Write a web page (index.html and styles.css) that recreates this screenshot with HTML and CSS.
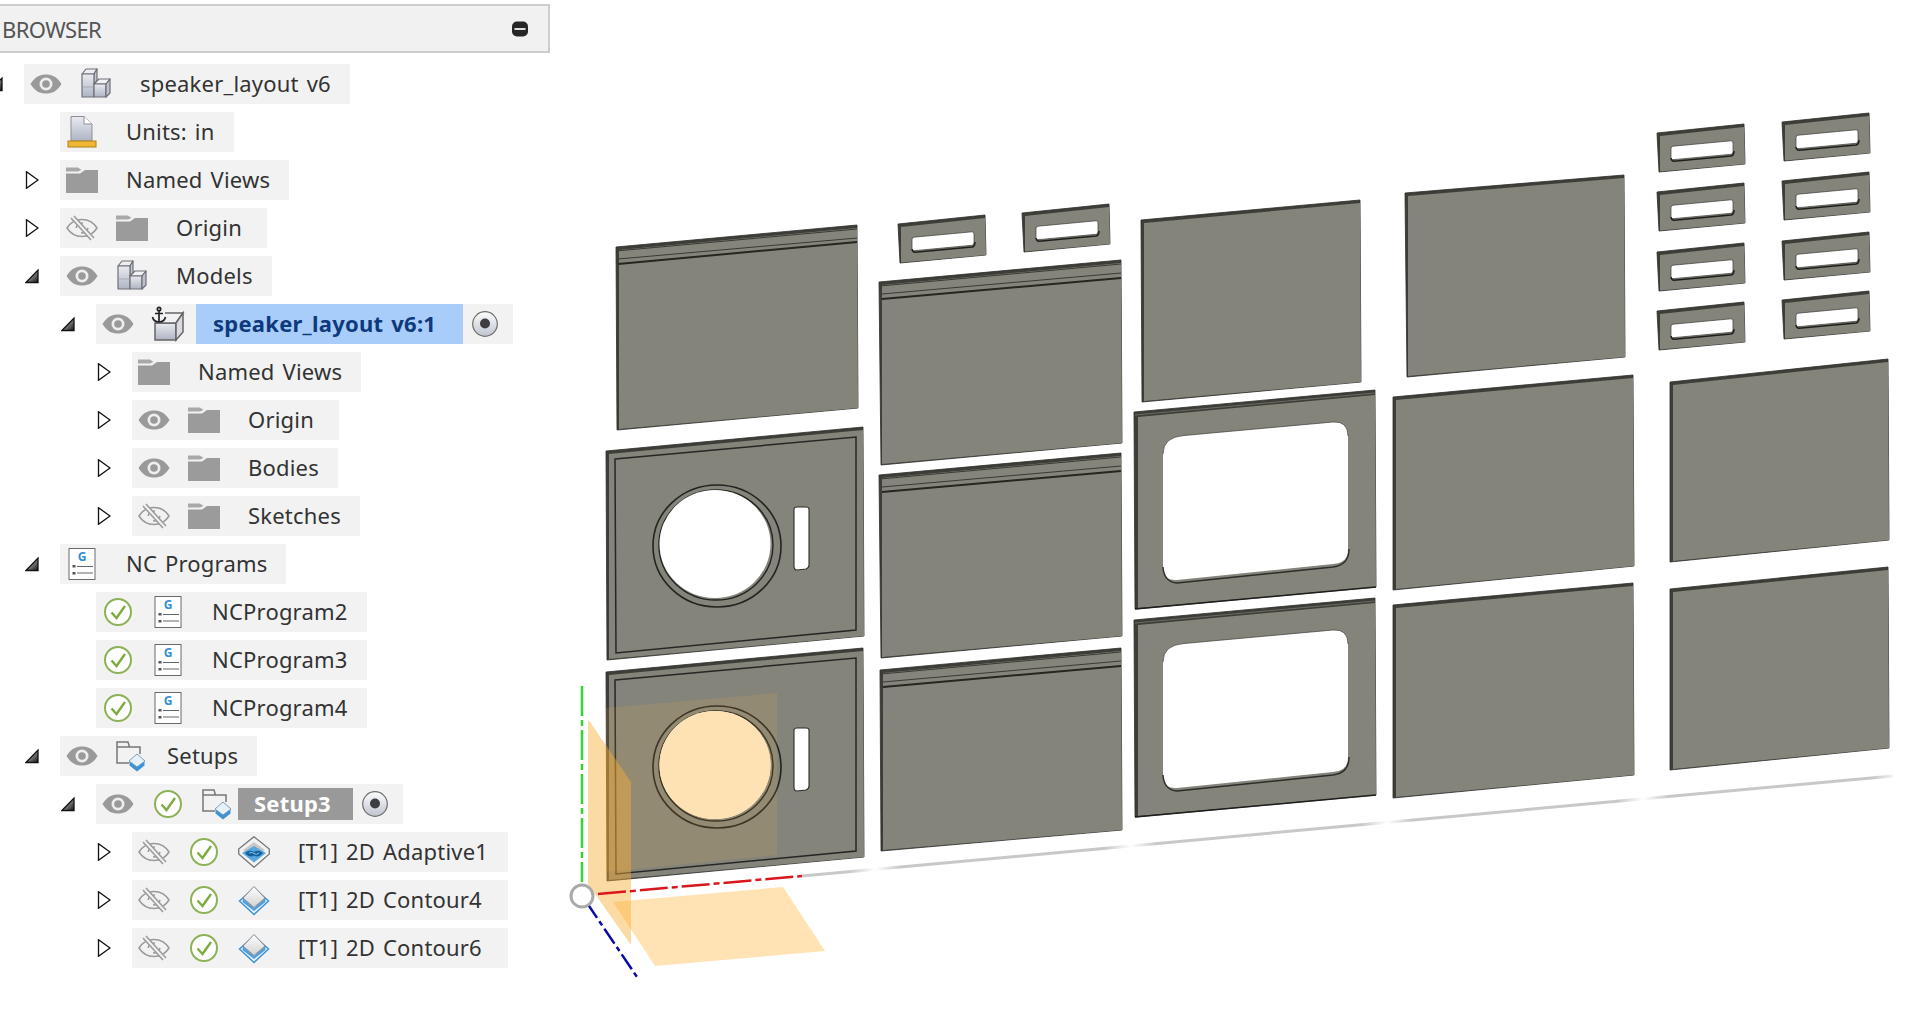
FILE: index.html
```html
<!DOCTYPE html>
<html lang="en">
<head>
<meta charset="utf-8">
<title>BROWSER</title>
<link rel="stylesheet" href="styles.css">
</head>
<body>
<svg class="sprite" aria-hidden="true">
  <defs>
    <linearGradient id="g-block" x1="0" y1="0" x2="0" y2="1"><stop offset="0" stop-color="#e9ebf0"/><stop offset="1" stop-color="#aeb4c4"/></linearGradient>
    <linearGradient id="g-top" x1="0" y1="0" x2="0" y2="1"><stop offset="0" stop-color="#ffffff"/><stop offset="1" stop-color="#d2d2d2"/></linearGradient>
    <linearGradient id="g-radio" x1="0" y1="0" x2="0" y2="1"><stop offset="0" stop-color="#fdfdfe"/><stop offset="1" stop-color="#bfc4d0"/></linearGradient>
    <linearGradient id="g-twist" x1="0" y1="0" x2="1" y2="1"><stop offset="0" stop-color="#eee"/><stop offset="1" stop-color="#111"/></linearGradient>
    <linearGradient id="g-ground" gradientUnits="userSpaceOnUse" x1="875" y1="0" x2="1131" y2="0" spreadMethod="repeat"><stop offset="0" stop-color="#ffffff"/><stop offset=".1" stop-color="#c8c8c8"/><stop offset=".9" stop-color="#c8c8c8"/><stop offset="1" stop-color="#ffffff"/></linearGradient>
  </defs>
  <symbol id="tw-closed" viewBox="0 0 14 18"><path d="M1.500 .7V17.300L13 9Z" fill="#fff" stroke="#111" stroke-width="1.300"/></symbol>
  <symbol id="tw-open" viewBox="0 0 14 18"><path d="M1 15.500H13V3Z" fill="url(#g-twist)" stroke="#111" stroke-width="1.300"/></symbol>
  <symbol id="i-eye" viewBox="0 0 32 32"><path d="M.5 16C6 7 12 6.500 16 6.500S26 7 31.500 16C26 25 20 25.500 16 25.500S6 25 .5 16Z" fill="#9a9a9a"/><circle cx="16" cy="16" r="6.500" fill="#eee"/><circle cx="16" cy="16" r="3.800" fill="#9a9a9a"/></symbol>
  <symbol id="i-eyeoff" viewBox="0 0 32 32"><g fill="none" stroke="#999" stroke-width="1.500"><path d="M1 16C6 8 12 7.500 16 7.500S26 8 31 16C26 24 20 24.500 16 24.500S6 24 1 16Z"/><path d="M10 16C11 12 14 11 17 11M22 16C21 20 18 21 15 21"/><path d="M6 5 27 27" stroke-width="4.500" stroke="#f2f2f2"/><path d="M5 6 25 28M8 4 28 26"/></g></symbol>
  <symbol id="i-folder" viewBox="0 0 32 32"><path d="M0 9.500H14L19 6H32V29H0Z" fill="#9b9b9b"/><path d="M0 3.500H12L15.500 6 12 7.500H0Z" fill="#a8a8a8"/></symbol>
  <symbol id="i-comp" viewBox="0 0 32 32"><g stroke="#6e7076" stroke-width="1.200" stroke-linejoin="round"><path d="M2 6 6 1H17L14 6Z" fill="#eceef2"/><path d="M14 6 17 1V13L14 16Z" fill="#c4c8d2"/><path d="M2 6H14V29H2Z" fill="url(#g-block)"/><path d="M14 16 19 11H30L26 16Z" fill="#f1f2f5"/><path d="M14 16H26V29H14Z" fill="url(#g-block)"/><path d="M26 16 30 11V25L26 29Z" fill="#bcc1cd"/><path d="M2 19H14" stroke="#9a9da5" stroke-width=".7"/></g></symbol>
  <symbol id="i-doc" viewBox="0 0 32 32"><path d="M5 .5H18L26 8V25H5Z" fill="url(#g-block)" stroke="#8c8f96"/><path d="M18 .5V8H26" fill="#fff" stroke="#8c8f96"/><rect x="2" y="25" width="28" height="6" fill="#efb734" stroke="#b08017"/></symbol>
  <symbol id="i-nc" viewBox="0 0 32 32"><rect x="3" y=".5" width="26" height="31" fill="#fff" stroke="#6b6b6b"/><rect x="6.500" y="17" width="3" height="2.500" fill="#555"/><rect x="6.500" y="24" width="3" height="2.500" fill="#555"/><path d="M11 18.500H27M11 25H27" stroke="#666"/></symbol>
  <symbol id="i-check" viewBox="0 0 32 32"><circle cx="16" cy="16" r="13" fill="#fff" stroke="#8db255" stroke-width="2"/><path d="M9.500 16.500 14.500 22 23 10" fill="none" stroke="#7dab3f" stroke-width="2.400"/></symbol>
  <symbol id="i-setup" viewBox="0 0 32 32"><path d="M13 23H1V2H12L13.500 7H24V14M1 7H13.500" fill="none" stroke="#777" stroke-width="1.500"/><path d="M21 14 29 21 21 27 13 21Z" fill="#e6f0f8" stroke="#6f95b5" stroke-width=".9"/><path d="M13.500 21.500 21 27 28.500 21.500V25.500L21 31.500 13.500 25.500Z" fill="#3f93d3"/></symbol>
  <symbol id="i-adaptive" viewBox="0 0 32 32"><path d="M16 .7 31.300 13V18L16 31.300 .7 18V13Z" fill="#f2f2f2" stroke="#777" stroke-width="1.300"/><path d="M16 6 27 14 16 22 5 14Z" fill="#c9c9c9"/><path d="M16 10 28 17 16 26.500 4 17Z" fill="#5aa6de"/><path d="M7 17Q12 13 16 16 20 13 25 17 20 22.500 16 19.500 12 22.500 7 17Z" fill="#14619e"/><path d="M11 17Q14 15.500 16 17.500 18 19.500 21 17" fill="none" stroke="#8cc4ec" stroke-width="1"/></symbol>
  <symbol id="i-contour" viewBox="0 0 32 32"><path d="M1.500 17 16 30.500 30.500 17 16 4Z" fill="#eaf4fb" stroke="#3f93d3" stroke-width="1.500"/><path d="M5 14 16 24 27 14 27.500 18 16 27 4.500 18Z" fill="#4f9fdc"/><path d="M16 2.500 27 14 16 23.500 5 14Z" fill="url(#g-top)" stroke="#8a8a8a"/></symbol>
  <symbol id="i-anchorbox" viewBox="0 0 32 32" overflow="visible"><path d="M3 15H24V32H3Z" fill="url(#g-block)" stroke="#666" stroke-width="1.500"/><path d="M13 5H31L24 15H3" fill="#f1f1f3" stroke="#666" stroke-width="1.500"/><path d="M24 15 31 5V24L24 32Z" fill="#d9dbe1" stroke="#666" stroke-width="1.500"/><g fill="none" stroke="#222" stroke-width="1.700"><circle cx="7" cy="1" r="1.700"/><path d="M7 3V14M3 5.500H11M.5 9C1.500 13 4.500 14 7 14S12.500 13 13.500 9"/></g></symbol>
  <symbol id="i-radio" viewBox="0 0 26 26"><circle cx="13" cy="13" r="12.300" fill="url(#g-radio)" stroke="#6f6f6f" stroke-width="1.200"/><circle cx="13" cy="12.500" r="5" fill="#3d3d42"/></symbol>
  <symbol id="i-collapse" viewBox="0 0 16 16"><rect x="0" y=".5" width="16" height="15" rx="5" fill="#262626"/><rect x="2.500" y="7" width="11" height="2" fill="#ddd"/></symbol>

  <symbol id="tab" viewBox="0 -10 90 50" overflow="visible">
    <polygon points="0,0 87,-9 88,31 2,39" class="edge"/>
    <polygon points="3,3 87,-6 88,31 3,38.500" class="face"/>
    <path d="M16 13.200 74 7.800Q76 7.600 76 10V18.500Q76 21 74 21.300L16 26.700Q14 27 14 25V15.500Q14 13.400 16 13.200Z" fill="#fff" stroke="#3a3a36" stroke-width=".7"/>
    <path d="M14 25Q14.500 28.300 17 28.300L74 23Q77 22.500 77 18" fill="none" stroke="#1f1f1c" stroke-width="1.500"/>
  </symbol>
  <symbol id="frame" viewBox="0 -30 260 240" overflow="visible">
    <polygon points="0,0 241,-22 242,175 1,197" class="edge"/>
    <polygon points="4,5 241,-17 242,175 4,196" class="face"/>
    <path d="M1 3 241 -19" stroke="#77776e" stroke-width=".8" fill="none"/>
    <path d="M50 23.500 199 10Q214 9 214 24V138Q214 151 199 152L43 168Q29 169 29 155V42Q29 25 50 23.500Z" fill="#fff"/>
    <path d="M29 155Q30 170 43 171L199 155Q215 153 215 137" fill="none" stroke="#2d2d2a" stroke-width="1.400"/>
    <path d="M29 42Q29 25 50 23.500L199 10Q214 9 214 24" fill="none" stroke="#3a3a36" stroke-width=".7"/>
    <path d="M1 197 242 175" stroke="#1e1e1c" stroke-width="1.500" fill="none"/>
  </symbol>
  <symbol id="round" viewBox="0 -30 260 250" overflow="visible">
    <polygon points="0,0 257,-24 258,185 1,209" class="edge"/>
    <polygon points="3,3 257,-21 258,185 3,208" class="face"/>
    <path d="M9 8 250 -14 250 179 10 202Z" fill="none" stroke="#262624" stroke-width="1.500"/>
    <ellipse cx="111" cy="95" rx="64" ry="61" fill="none" stroke="#232320" stroke-width="1.600"/>
    <ellipse cx="110" cy="94" rx="57" ry="55" fill="none" stroke="#232320" stroke-width="1.400"/>
    <ellipse cx="109" cy="93" rx="55.500" ry="54" fill="#fff"/>
    <path d="M188 58Q188 56 191 56H200Q203 56 203 58V114Q203 117 200 118L191 119Q188 119 188 115Z" fill="#fff" stroke="#2d2d2a" stroke-width="1.100"/>
  </symbol>
</svg>

<svg class="canvas" viewBox="0 0 1928 1030" role="img" aria-label="Model viewport">
  <!-- small tabs -->
  <use href="#tab" x="898" y="214" width="90" height="50"/>
  <use href="#tab" x="1022" y="203" width="90" height="50"/>
  <use href="#tab" x="1657" y="123" width="90" height="50"/>
  <use href="#tab" x="1657" y="182" width="90" height="50"/>
  <use href="#tab" x="1657" y="242" width="90" height="50"/>
  <use href="#tab" x="1657" y="301" width="90" height="50"/>
  <use href="#tab" x="1782" y="112" width="90" height="50"/>
  <use href="#tab" x="1782" y="171" width="90" height="50"/>
  <use href="#tab" x="1782" y="231" width="90" height="50"/>
  <use href="#tab" x="1782" y="290" width="90" height="50"/>

  <!-- grooved panels -->
  <polygon class="edge" points="616,247 857,225 858,408 617,430"/>
  <polygon class="face" points="619,250 857,228 858,408 619,429"/>
  <path class="groove-thin" d="M616 251 857 229M618 259 857 238"/>
  <path class="groove" d="M618 264 857 242"/>

  <polygon class="edge" points="879,282 1121,260 1122,443 881,465"/>
  <polygon class="face" points="882,285 1121,263 1122,443 882,464"/>
  <path class="groove-thin" d="M880 286 1121 264M882 294 1121 273"/>
  <path class="groove" d="M882 299 1121 278"/>

  <polygon class="edge" points="879,475 1121,453 1122,636 881,658"/>
  <polygon class="face" points="882,478 1121,456 1122,636 882,657"/>
  <path class="groove-thin" d="M880 479 1121 457M882 487 1121 466"/>
  <path class="groove" d="M882 492 1121 471"/>

  <polygon class="edge" points="880,670 1121,648 1122,830 881,851"/>
  <polygon class="face" points="883,673 1121,651 1122,830 883,850"/>
  <path class="groove-thin" d="M881 674 1121 652M883 682 1121 661"/>
  <path class="groove" d="M883 687 1121 666"/>

  <!-- plain panels -->
  <polygon class="edge" points="1141,220 1360,200 1361,382 1142,402"/>
  <polygon class="face" points="1144,223 1360,203 1361,382 1144,401"/>
  <polygon class="edge" points="1405,193 1624,175 1625,357 1407,377"/>
  <polygon class="face" points="1408,196 1624,178 1625,357 1408,376"/>
  <polygon class="edge" points="1393,397 1633,375 1634,566 1393,590"/>
  <polygon class="face" points="1396,400 1633,378 1634,566 1396,589"/>
  <polygon class="edge" points="1393,605 1633,583 1634,775 1393,798"/>
  <polygon class="face" points="1396,608 1633,586 1634,775 1396,797"/>
  <polygon class="edge" points="1670,382 1888,359 1889,540 1670,562"/>
  <polygon class="face" points="1673,385 1888,362 1889,540 1673,561"/>
  <polygon class="edge" points="1670,589 1888,567 1889,748 1670,770"/>
  <polygon class="face" points="1673,592 1888,570 1889,748 1673,769"/>

  <!-- window frames -->
  <use href="#frame" x="1134" y="382" width="260" height="240"/>
  <use href="#frame" x="1134" y="590" width="260" height="240"/>

  <!-- round-hole panels -->
  <use href="#round" x="606" y="421" width="260" height="250"/>
  <use href="#round" x="606" y="642" width="260" height="250"/>

  <!-- construction planes -->
  <polygon class="tint-panel" points="606,708 777,693 777,855 606,872"/>
  <ellipse cx="715" cy="765" rx="55.500" ry="54" class="tint-hole"/>
  <polygon class="plane" points="613,902 783,887 825,951 655,966"/>
  <polygon class="plane-dark" points="588,719 631,782 631,945 588,884"/>

  <!-- axes -->
  <path class="axis-ground" d="M802 876 1893 776"/>
  <path class="axis-green" d="M582 686V882"/>
  <path class="axis-red" d="M598 894 802 876"/>
  <path class="axis-blue" d="M587 903 637 977"/>
  <circle class="origin" cx="582" cy="896" r="11"/>
</svg>

<main class="browser">
  <header class="browser-head">
    <span class="browser-title">BROWSER</span>
    <svg class="collapse"><use href="#i-collapse"/></svg>
  </header>
  <ul class="tree">
    <li class="item l0"><span class="twist"><svg class="tw"><use href="#tw-open"/></svg></span><div class="row"><svg class="ic"><use href="#i-eye"/></svg><svg class="ic"><use href="#i-comp"/></svg><span class="label">speaker_layout v6</span></div></li>
    <li class="item l1"><span class="twist"></span><div class="row"><svg class="ic"><use href="#i-doc"/></svg><span class="label">Units: in</span></div></li>
    <li class="item l1"><span class="twist"><svg class="tw"><use href="#tw-closed"/></svg></span><div class="row"><svg class="ic"><use href="#i-folder"/></svg><span class="label">Named Views</span></div></li>
    <li class="item l1"><span class="twist"><svg class="tw"><use href="#tw-closed"/></svg></span><div class="row"><svg class="ic"><use href="#i-eyeoff"/></svg><svg class="ic"><use href="#i-folder"/></svg><span class="label pad">Origin</span></div></li>
    <li class="item l1"><span class="twist"><svg class="tw"><use href="#tw-open"/></svg></span><div class="row"><svg class="ic"><use href="#i-eye"/></svg><svg class="ic"><use href="#i-comp"/></svg><span class="label">Models</span></div></li>
    <li class="item l2"><span class="twist"><svg class="tw"><use href="#tw-open"/></svg></span><div class="row"><svg class="ic"><use href="#i-eye"/></svg><svg class="ic"><use href="#i-anchorbox"/></svg><span class="label sel">speaker_layout v6:1</span><svg class="radio"><use href="#i-radio"/></svg></div></li>
    <li class="item l3"><span class="twist"><svg class="tw"><use href="#tw-closed"/></svg></span><div class="row"><svg class="ic"><use href="#i-folder"/></svg><span class="label">Named Views</span></div></li>
    <li class="item l3"><span class="twist"><svg class="tw"><use href="#tw-closed"/></svg></span><div class="row"><svg class="ic"><use href="#i-eye"/></svg><svg class="ic"><use href="#i-folder"/></svg><span class="label pad">Origin</span></div></li>
    <li class="item l3"><span class="twist"><svg class="tw"><use href="#tw-closed"/></svg></span><div class="row"><svg class="ic"><use href="#i-eye"/></svg><svg class="ic"><use href="#i-folder"/></svg><span class="label">Bodies</span></div></li>
    <li class="item l3"><span class="twist"><svg class="tw"><use href="#tw-closed"/></svg></span><div class="row"><svg class="ic"><use href="#i-eyeoff"/></svg><svg class="ic"><use href="#i-folder"/></svg><span class="label">Sketches</span></div></li>
    <li class="item l1"><span class="twist"><svg class="tw"><use href="#tw-open"/></svg></span><div class="row"><svg class="ic" viewBox="0 0 32 32"><use href="#i-nc" width="32" height="32"/><text x="16" y="13" class="g-letter">G</text></svg><span class="label">NC Programs</span></div></li>
    <li class="item l2"><span class="twist"></span><div class="row"><svg class="ic"><use href="#i-check"/></svg><svg class="ic" viewBox="0 0 32 32"><use href="#i-nc" width="32" height="32"/><text x="16" y="13" class="g-letter">G</text></svg><span class="label">NCProgram2</span></div></li>
    <li class="item l2"><span class="twist"></span><div class="row"><svg class="ic"><use href="#i-check"/></svg><svg class="ic" viewBox="0 0 32 32"><use href="#i-nc" width="32" height="32"/><text x="16" y="13" class="g-letter">G</text></svg><span class="label">NCProgram3</span></div></li>
    <li class="item l2"><span class="twist"></span><div class="row"><svg class="ic"><use href="#i-check"/></svg><svg class="ic" viewBox="0 0 32 32"><use href="#i-nc" width="32" height="32"/><text x="16" y="13" class="g-letter">G</text></svg><span class="label">NCProgram4</span></div></li>
    <li class="item l1"><span class="twist"><svg class="tw"><use href="#tw-open"/></svg></span><div class="row"><svg class="ic"><use href="#i-eye"/></svg><svg class="ic"><use href="#i-setup"/></svg><span class="label tight">Setups</span></div></li>
    <li class="item l2"><span class="twist"><svg class="tw"><use href="#tw-open"/></svg></span><div class="row"><svg class="ic"><use href="#i-eye"/></svg><svg class="ic"><use href="#i-check"/></svg><svg class="ic"><use href="#i-setup"/></svg><span class="label active">Setup3</span><svg class="radio"><use href="#i-radio"/></svg></div></li>
    <li class="item l3"><span class="twist"><svg class="tw"><use href="#tw-closed"/></svg></span><div class="row op"><svg class="ic"><use href="#i-eyeoff"/></svg><svg class="ic"><use href="#i-check"/></svg><svg class="ic"><use href="#i-adaptive"/></svg><span class="label">[T1] 2D Adaptive1</span></div></li>
    <li class="item l3"><span class="twist"><svg class="tw"><use href="#tw-closed"/></svg></span><div class="row op"><svg class="ic"><use href="#i-eyeoff"/></svg><svg class="ic"><use href="#i-check"/></svg><svg class="ic"><use href="#i-contour"/></svg><span class="label">[T1] 2D Contour4</span></div></li>
    <li class="item l3"><span class="twist"><svg class="tw"><use href="#tw-closed"/></svg></span><div class="row op"><svg class="ic"><use href="#i-eyeoff"/></svg><svg class="ic"><use href="#i-check"/></svg><svg class="ic"><use href="#i-contour"/></svg><span class="label">[T1] 2D Contour6</span></div></li>
  </ul>
</main>
</body>
</html>
```
FILE: styles.css
```css
* { box-sizing: border-box; }
html, body { margin: 0; height: 100%; background: #fff; overflow: hidden; }
body { position: relative; font-family: "Noto Sans", "DejaVu Sans", sans-serif; color: #333; }

.sprite { position: absolute; width: 0; height: 0; }
.canvas { position: absolute; left: 0; top: 0; width: 1928px; height: 1030px; }

.face { fill: #84847b; }
.edge { fill: #3e3e39; stroke: #2c2c29; stroke-width: .8; stroke-linejoin: round; }
.groove { stroke: #26261f; stroke-width: 2; fill: none; }
.groove-thin { stroke: #3a3a35; stroke-width: 1; fill: none; }

.tint-panel { fill: #ffb43c; fill-opacity: .12; }
.tint-hole { fill: #fee2b4; }
.plane { fill: #ffc05c; fill-opacity: .45; }
.plane-dark { fill: #f9ae33; fill-opacity: .45; }

.axis-ground { stroke: url(#g-ground); stroke-width: 3; fill: none; }
.axis-green { stroke: #35d435; stroke-width: 2.5; stroke-dasharray: 30 4 6 4; fill: none; }
.axis-red { stroke: #d8181c; stroke-width: 2.5; stroke-dasharray: 28 4 6 4; fill: none; }
.axis-blue { stroke: #0a0aa8; stroke-width: 2.5; stroke-dasharray: 18 4 5 4; fill: none; }
.origin { fill: #fff; stroke: #a9a9a9; stroke-width: 3; }

.g-letter { font: 700 12px "Noto Sans", sans-serif; fill: #2f8fd6; text-anchor: middle; }

.browser { position: relative; padding-top: 4px; }
.browser-head {
  width: 550px;
  height: 49px;
  display: flex;
  align-items: center;
  justify-content: space-between;
  padding: 0 20px 0 2px;
  background: #f1f1f1;
  border: 2px solid #cdcdcd;
  border-left: 0;
}
.browser-title { font-size: 22px; letter-spacing: -.6px; color: #555; line-height: 1; }
.collapse { width: 16px; height: 16px; }

.tree { list-style: none; margin: 11px 0 0; padding: 0; display: flex; flex-direction: column; gap: 8px; }
.item { display: flex; align-items: center; height: 40px; }
.l0 { margin-left: -12px; }
.l1 { margin-left: 24px; }
.l2 { margin-left: 60px; }
.l3 { margin-left: 96px; }

.twist { width: 36px; flex: none; display: flex; align-items: center; padding-left: 1px; }
.tw { width: 14px; height: 18px; }

.row { display: flex; align-items: center; gap: 18px; height: 40px; padding-left: 6px; background: #f2f2f2; }
.op { min-width: 376px; }
.ic { width: 32px; height: 32px; flex: none; overflow: visible; }
.radio { width: 26px; height: 26px; flex: none; margin: 0 15px 0 -9px; }

.label { font-size: 22px; letter-spacing: .2px; word-spacing: 2px; padding: 0 19px 2px 10px; white-space: nowrap; line-height: 38px; height: 40px; }
.pad { padding-right: 25px; }
.tight { margin-left: -9px; }
.sel { margin-left: -6px; padding: 0 27px 2px 17px; letter-spacing: .25px; background: #a9cdfa; color: #0e3a7c; font-weight: 700; }
.active { margin-left: -14px; padding: 0 22px 2px 16px; height: 32px; line-height: 30px; background: #999; color: #fff; font-weight: 700; }
```
